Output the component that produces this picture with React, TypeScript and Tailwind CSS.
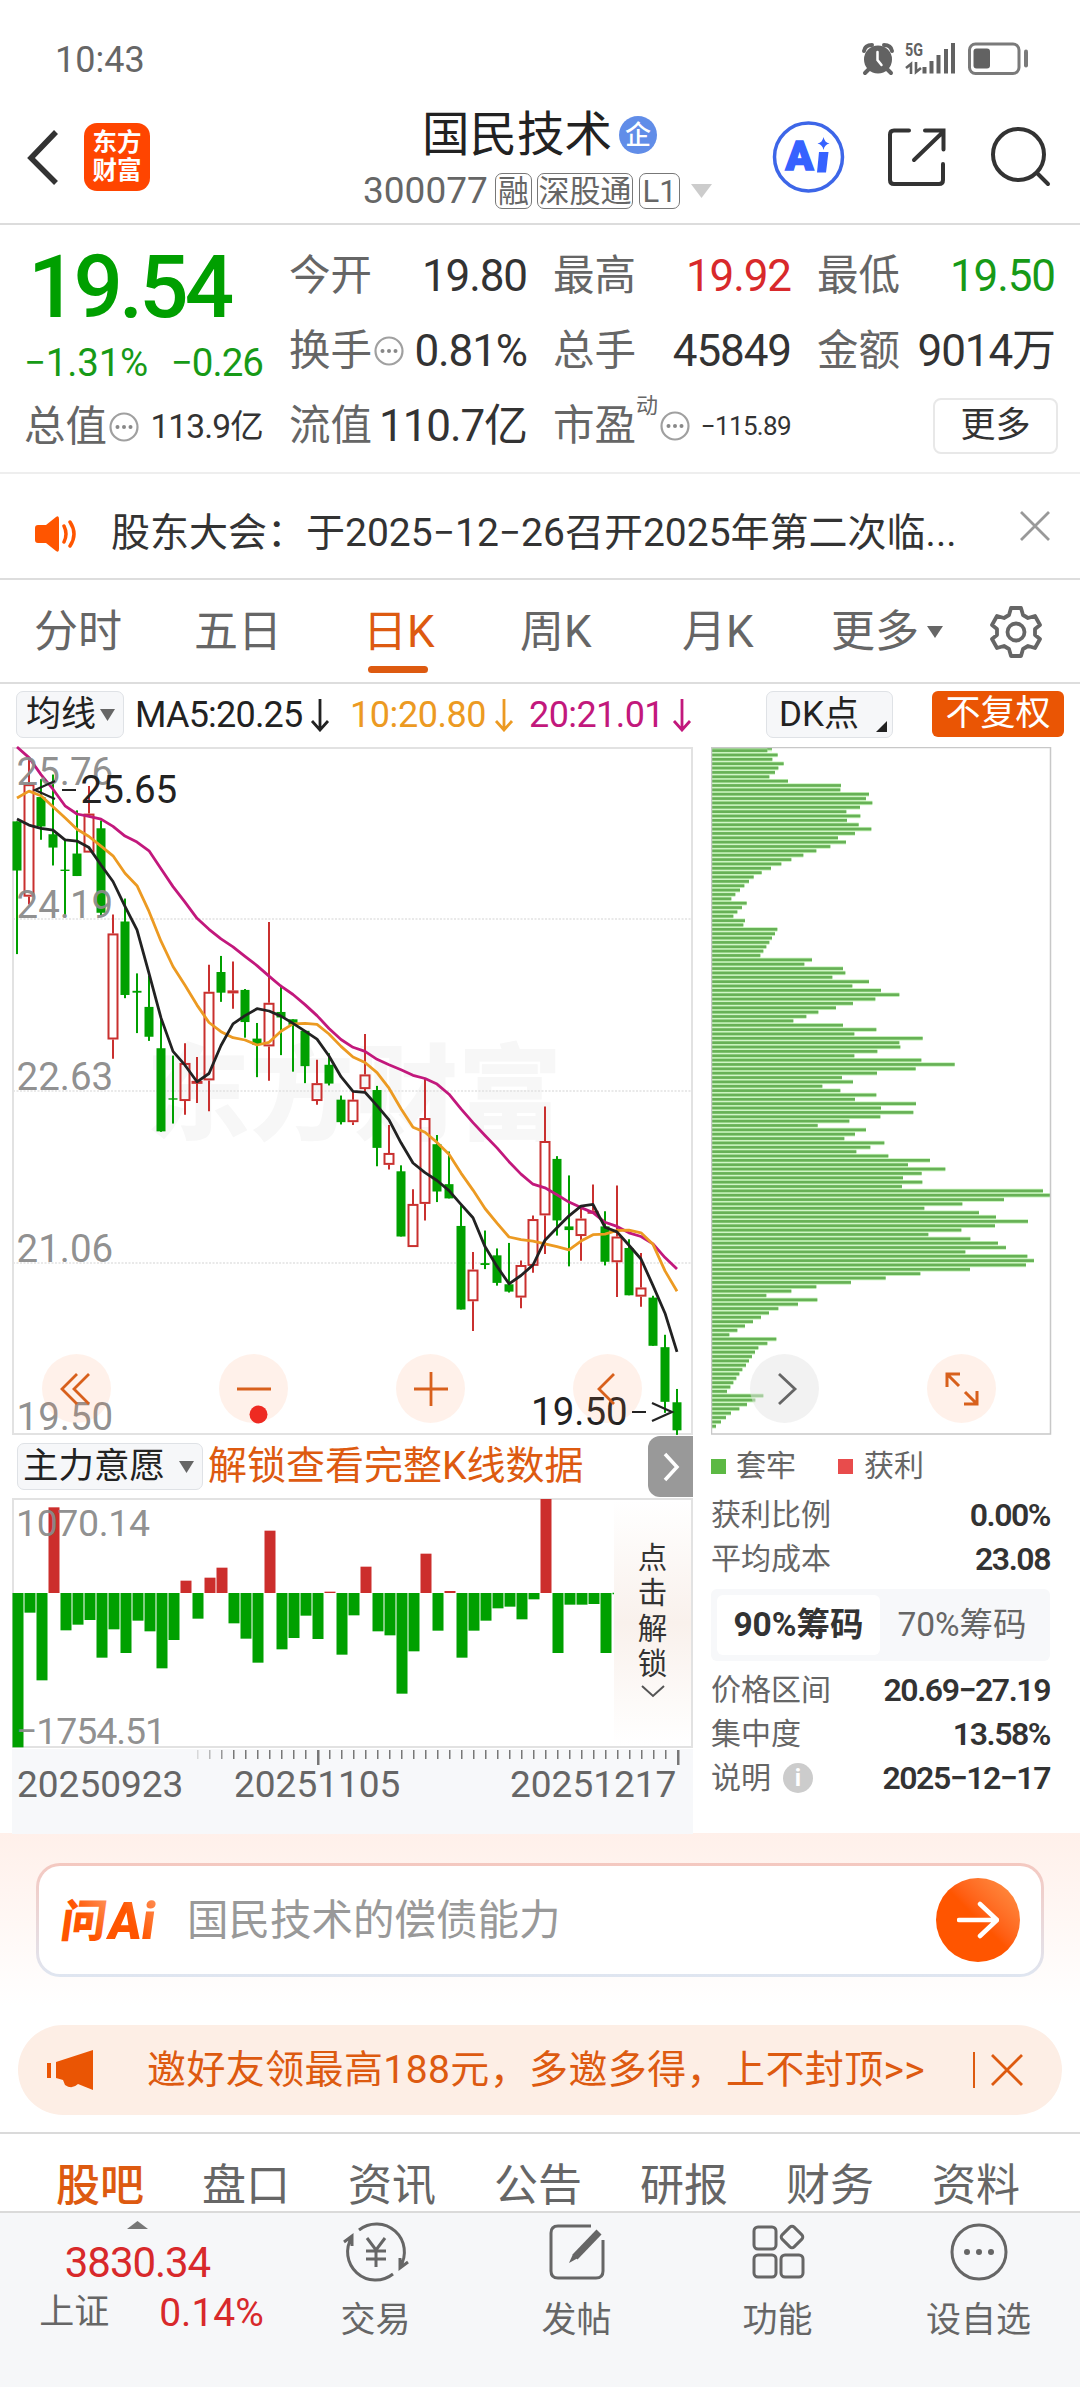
import clsx from "clsx";
import type { ReactNode } from "react";

type Candle = ["u" | "d", number, number, number, number];

// [direction, body top, body bottom, wick top, wick bottom]
const CANDLES: Candle[] = [
  ["d", 177, 284, 177, 466],
  ["u", 96, 341, 40, 358],
  ["d", 124, 188, 85, 217],
  ["d", 205, 234, 75, 273],
  ["d", 282, 285, 215, 381],
  ["d", 247, 296, 153, 296],
  ["u", 160, 245, 100, 245],
  ["d", 192, 376, 175, 381],
  ["u", 421, 652, 380, 694],
  ["d", 395, 555, 345, 562],
  ["d", 546, 550, 508, 638],
  ["d", 581, 646, 513, 655],
  ["d", 671, 852, 605, 853],
  ["d", 780, 783, 687, 835],
  ["u", 703, 786, 660, 816],
  ["u", 742, 748, 690, 790],
  ["u", 548, 741, 489, 808],
  ["d", 505, 550, 470, 570],
  ["u", 545, 551, 482, 585],
  ["d", 544, 614, 542, 648],
  ["d", 650, 664, 616, 734],
  ["u", 572, 667, 396, 742],
  ["d", 592, 604, 533, 686],
  ["d", 608, 620, 608, 722],
  ["d", 633, 710, 632, 747],
  ["u", 747, 786, 696, 794],
  ["d", 707, 748, 682, 752],
  ["d", 783, 832, 774, 837],
  ["u", 783, 832, 765, 838],
  ["u", 728, 760, 640, 765],
  ["d", 762, 888, 753, 928],
  ["u", 899, 925, 838, 935],
  ["d", 939, 1081, 926, 1081],
  ["u", 1010, 1104, 978, 1104],
  ["u", 823, 1010, 737, 1046],
  ["d", 880, 983, 860, 1006],
  ["d", 967, 998, 896, 998],
  ["d", 1058, 1240, 1013, 1240],
  ["u", 1153, 1222, 1115, 1287],
  ["d", 1139, 1143, 1068, 1152],
  ["d", 1122, 1182, 1107, 1188],
  ["d", 1185, 1201, 1095, 1203],
  ["u", 1143, 1214, 1133, 1237],
  ["u", 1043, 1145, 1035, 1160],
  ["u", 873, 1035, 798, 1119],
  ["d", 912, 1046, 906, 1079],
  ["d", 1059, 1067, 948, 1146],
  ["u", 1042, 1080, 1018, 1134],
  ["u", 1025, 1031, 968, 1031],
  ["d", 1059, 1136, 1026, 1144],
  ["u", 1081, 1137, 970, 1213],
  ["d", 1106, 1209, 1087, 1209],
  ["u", 1192, 1212, 1117, 1234],
  ["d", 1214, 1319, 1210, 1319],
  ["d", 1322, 1441, 1295, 1465],
  ["d", 1442, 1503, 1413, 1513],
];

const MA5 = [
  172, 185, 192, 196, 217, 220, 234, 272, 308, 362, 413, 508, 605, 678, 708,
  744, 726, 665, 618, 600, 585, 590, 601, 617, 634, 651, 688, 733, 765, 767,
  796, 827, 877, 921, 942, 959, 981, 1011, 1040, 1103, 1146, 1184, 1166, 1143,
  1089, 1062, 1036, 1015, 1011, 1061, 1071, 1100, 1130, 1188, 1248, 1332,
];
const MA10 = [
  126, 111, 121, 145, 169, 194, 210, 231, 252, 290, 317, 373, 438, 493, 534,
  577, 615, 635, 648, 653, 664, 658, 634, 618, 617, 619, 640, 667, 690, 702,
  724, 758, 803, 843, 854, 876, 902, 943, 980, 1020, 1052, 1082, 1088, 1091,
  1097, 1103, 1110, 1091, 1077, 1076, 1068, 1067, 1073, 1098, 1156, 1200,
];
const MA20 = [
  15, 38, 75, 107, 143, 161, 166, 172, 188, 209, 222, 241, 280, 319, 353, 388,
  412, 433, 450, 471, 491, 514, 536, 554, 576, 600, 628, 652, 669, 678, 695,
  707, 718, 730, 737, 749, 771, 803, 833, 861, 888, 918, 945, 967, 975, 990,
  1006, 1018, 1029, 1050, 1059, 1073, 1081, 1097, 1127, 1152,
];

const CHIPS = [
  245, 231, 262, 246, 280, 264, 254, 237, 293, 452, 450, 536, 527, 546, 509,
  468, 510, 470, 505, 543, 494, 443, 467, 420, 378, 339, 303, 273, 242, 214,
  190, 176, 162, 149, 135, 123, 169, 155, 141, 129, 164, 159, 261, 254, 245,
  237, 228, 219, 210, 365, 342, 458, 465, 426, 536, 486, 572, 627, 555, 488,
  437, 384, 348, 309, 458, 558, 492, 697, 627, 630, 561, 492, 693, 793, 676,
  560, 455, 488, 396, 450, 558, 494, 677, 572, 669, 570, 477, 382, 527, 494,
  462, 582, 540, 498, 594, 719, 653, 765, 694, 638, 696, 635, 1058, 1080, 941,
  816, 702, 866, 917, 1013, 914, 813, 714, 840, 923, 947, 825, 1011, 1031,
  1007, 839, 690, 586, 482, 378, 303, 228, 381, 323, 264, 236, 212, 188, 164,
  141, 117, 258, 231, 204, 194, 185, 176, 167, 156, 147, 138, 129, 120, 110,
  219, 195, 170, 147, 122, 107, 92, 77,
];

// positive values hang below the zero line
const FLOWS = [
  463, 59, 262, -257, 112, 95, 81, 194, 109, 180, 83, 115, 226, 141, -37, 77,
  -46, -76, 91, 137, 209, -187, 169, 135, 68, 138, -4, 185, 67, -79, 115, 127,
  302, 175, -118, 113, -6, 194, 113, 83, 46, 41, 79, 19, -282, 180, 35, 35, 33,
  180,
];

const STEP = 12;
const px = (i: number) => 5 + i * STEP;
const py = (v: number) => (v - 15) * 0.4592;
const line = (values: number[]) =>
  values.map((v, i) => `${px(i)},${py(v).toFixed(1)}`).join(" ");

function Num({
  children,
  className,
}: {
  children: ReactNode;
  className?: string;
}) {
  return (
    <span className={clsx("tracking-[-0.025em]", className)}>{children}</span>
  );
}

function StatusBar() {
  return (
    <div className="flex h-[84px] items-start justify-between pt-[41px] pr-[51px] pl-[55px] text-[#666]">
      <span className="text-[36px] leading-[38px]">10:43</span>
      <svg width="168" height="36" viewBox="861 42 168 36" fill="none" className="overflow-visible">
        <circle cx="878" cy="60.500" r="14" fill="#626262" />
        <path d="M864 52q1-6 8-6M892 52q-1-6-8-6M869 70l-4 4M887 70l4 4" stroke="#626262" strokeWidth="4" strokeLinecap="round" />
        <path d="M877.500 53v8l4 5" stroke="#fff" strokeWidth="2.500" strokeLinecap="round" />
        <text x="905" y="57" fontSize="18" fontWeight="700" fill="#626262" textLength="18" lengthAdjust="spacingAndGlyphs">5G</text>
        <path d="M906 69l5-4v10M916 63v10l5-4" stroke="#626262" strokeWidth="2.600" />
        <path d="M924.500 68v6.500M931.500 62v12.500M938.500 56v18.500M946 50v24.500M953 44v30.500" stroke="#626262" strokeWidth="4" />
        <rect x="969.500" y="45" width="49.500" height="29.500" rx="6" stroke="#7a7a7a" strokeWidth="3" />
        <rect x="973.500" y="49.500" width="16.500" height="20" rx="3" fill="#626262" />
        <path d="M1026 52.500v14" stroke="#7a7a7a" strokeWidth="4" strokeLinecap="round" />
      </svg>
    </div>
  );
}

function Tag({ children, className }: { children: ReactNode; className: string }) {
  return (
    <span
      className={clsx(
        "flex h-[36px] items-center justify-center rounded-[7px] border-[1.5px] border-[#777] text-[31px] leading-none",
        className,
      )}
    >
      {children}
    </span>
  );
}

function Header() {
  return (
    <header className="flex h-[141px] border-b-2 border-[#dcdcdc]">
      <div className="flex w-[363px] pt-[39px] pl-[26px]">
        <svg width="34" height="68" viewBox="26 123 34 68" fill="none">
          <path d="M56 132L31 158l25 25" stroke="#333" strokeWidth="5.500" />
        </svg>
        <div className="ml-[24px] flex h-[68px] w-[66px] flex-col items-center justify-center rounded-[13px] bg-[#ff4500] text-[24.500px] leading-[28px] font-bold text-white">
          <span>东方</span>
          <span>财富</span>
        </div>
      </div>
      <div className="w-[402px] pt-[24px]">
        <div className="flex items-center pl-[59px]">
          <span className="text-[47.500px] leading-[54px] text-[#222]">国民技术</span>
          <span className="ml-[7px] flex size-[38px] items-center justify-center rounded-full bg-[#618de8] text-[26px] leading-none font-medium text-white">
            企
          </span>
        </div>
        <div className="mt-[10px] flex items-center text-[#666]">
          <span className="w-[132px] text-[37px] leading-[38px]">300077</span>
          <Tag className="w-[37px]">融</Tag>
          <Tag className="ml-[5px] w-[96px]">深股通</Tag>
          <Tag className="ml-[6px] w-[41px]">L1</Tag>
          <svg className="ml-[11px]" width="21" height="14">
            <path d="M0 0h21L10.500 14z" fill="#ccc" />
          </svg>
        </div>
      </div>
      <svg width="290" height="80" viewBox="765 118 290 80" fill="none" className="mt-[34px]">
        <circle cx="808.500" cy="157" r="34" stroke="#3d66e8" strokeWidth="3.500" />
        <text x="785.500" y="169.500" fontSize="40" fontWeight="900" fill="#3662ff" stroke="#3662ff" strokeWidth="1.500" textLength="28" lengthAdjust="spacingAndGlyphs">A</text>
        <path d="M819 152h9.500l-2.500 20.500h-9z" fill="#3662ff" />
        <path d="M823.500 137q1 5.500 6 6.500-5 1-6 6.500-1-5.500-6-6.500 5-1 6-6.500z" fill="#3662ff" />
        <g stroke="#333" strokeWidth="4" strokeLinecap="round">
          <path d="M909 130.500h-15q-4 0-4 4V180q0 4 4 4h45q4 0 4-4v-16M925 130.500h18.500v19M943 132l-29 28" />
          <circle cx="1018.500" cy="154.500" r="25.500" />
          <path d="M1037 173l11 11" />
        </g>
      </svg>
    </header>
  );
}

function Dots() {
  return (
    <svg className="ml-[2px] shrink-0" width="30" height="30" viewBox="0 0 30 30" fill="none">
      <circle cx="15" cy="15" r="13.500" stroke="#a0a0a0" strokeWidth="2.200" />
      <g fill="#888">
        <circle cx="8.500" cy="15" r="2" />
        <circle cx="15" cy="15" r="2" />
        <circle cx="21.500" cy="15" r="2" />
      </g>
    </svg>
  );
}

interface CellProps {
  label: string;
  value: string;
  hint?: boolean;
  sup?: string;
  valueClass?: string;
}

function Cell({ label, value, hint, sup, valueClass = "text-[44px] text-[#333]" }: CellProps) {
  return (
    <div className="flex h-[75px] items-center whitespace-nowrap">
      <span className="text-[41.500px] leading-none text-[#666]">{label}</span>
      {sup && <span className="-mt-[40px] text-[22px] leading-none text-[#666]">{sup}</span>}
      {hint && <Dots />}
      <Num className={clsx("ml-auto leading-none", valueClass)}>{value}</Num>
    </div>
  );
}

function Quote() {
  return (
    <section className="grid h-[249px] grid-cols-[239px_238px_238px_238px] gap-x-[26px] border-b-2 border-[#eee] pt-[13px] pl-[24px]">
      <div>
        <div className="h-[99px] pl-[4px] text-[87px] leading-[98px] font-medium tracking-[-0.045em] text-[#009f00]">
          19.54
        </div>
        <div className="flex h-[52px] items-center justify-between text-[38.500px] leading-none text-[#179a17]">
          <span className="tracking-[-0.005em]">−1.31%</span>
          <Num>−0.26</Num>
        </div>
        <Cell label="总值" hint value="113.9亿" valueClass="text-[33.500px] text-[#333]" />
      </div>
      <div>
        <Cell label="今开" value="19.80" />
        <Cell label="换手" hint value="0.81%" />
        <Cell label="流值" value="110.7亿" valueClass="text-[44px] text-[#333]" />
      </div>
      <div>
        <Cell label="最高" value="19.92" valueClass="text-[44px] text-[#d8292b]" />
        <Cell label="总手" value="45849" />
        <Cell label="市盈" sup="动" hint value="−115.89" valueClass="text-[26px] text-[#333]" />
      </div>
      <div>
        <Cell label="最低" value="19.50" valueClass="text-[44px] text-[#179a17]" />
        <Cell label="金额" value="9014万" valueClass="text-[44px] text-[#333]" />
        <div className="flex h-[75px] items-center justify-end">
          <div className="-mr-[3px] flex h-[56px] w-[125px] items-center justify-center rounded-[8px] border-2 border-[#e8e8e8] text-[35px] leading-none text-[#333]">
            更多
          </div>
        </div>
      </div>
    </section>
  );
}

function News() {
  return (
    <section className="flex h-[106px] items-center border-b-2 border-[#ddd] pt-[15px] pl-[34px]">
      <svg width="44" height="36" viewBox="0 0 44 36" fill="none">
        <path d="M4 9h8L22 1q3-2 3 2v30q0 4-3 2L12 27H4q-3 0-3-3V12q0-3 3-3z" fill="#ff5500" />
        <path d="M30 10q4 8 0 16M36 6q8 12 0 24" stroke="#ff5500" strokeWidth="3.500" strokeLinecap="round" />
      </svg>
      <span className="ml-[33px] w-[843px] text-[39px] leading-none whitespace-nowrap text-[#333]">
        股东大会：于2025−12−26召开2025年第二次临...
      </span>
      <svg className="-mt-[16px] ml-[66px]" width="30" height="30">
        <path d="M1 1l28 28M29 1L1 29" stroke="#999" strokeWidth="2.800" />
      </svg>
    </section>
  );
}

function PeriodTabs() {
  return (
    <nav className="flex h-[104px] items-center border-b-2 border-[#ddd] pt-[2px] pl-[34px] text-[44px] leading-none text-[#666]">
      <span className="w-[160px]">分时</span>
      <span className="w-[169px]">五日</span>
      <span className="relative w-[157px] text-[#dd5a10]">
        日K
        <span className="absolute top-[56px] left-[5px] h-[7px] w-[60px] rounded-full bg-[#dd5a10]" />
      </span>
      <span className="w-[162px]">周K</span>
      <span className="w-[149px]">月K</span>
      <span>更多</span>
      <svg className="ml-[8px]" width="16" height="12">
        <path d="M0 0h16L8 12z" fill="#666" />
      </svg>
      <svg className="ml-[46px]" width="54" height="54" viewBox="-27 -27 54 54" fill="none" stroke="#666" strokeWidth="3.800" strokeLinejoin="round">
        <path d="M-5-24H5L7-17 12-14 19-16 24-7 19-3V3L24 7 19 16 12 14 7 17 5 24H-5L-7 17-12 14-19 16-24 7-19 3V-3L-24-7-19-16-12-14-7-17z" />
        <circle r="8.500" />
      </svg>
    </nav>
  );
}

function DownArrow() {
  return (
    <svg className="ml-[8px]" width="20" height="34" fill="none">
      <path d="M10 1v30M2 23l8 9 8-9" stroke="currentColor" strokeWidth="2.800" />
    </svg>
  );
}

function IndicatorRow() {
  return (
    <div className="flex h-[63px] items-start pt-[7px] pl-[16px] text-[36px] leading-[46px] whitespace-nowrap">
      <div className="flex h-[47px] w-[108px] items-center rounded-[7px] border border-[#dfe2e6] bg-[#f6f7f9] pl-[9px] text-[35px] text-[#222]">
        均线
        <svg className="ml-[4px]" width="15" height="12">
          <path d="M0 0h15L7.500 12z" fill="#666" />
        </svg>
      </div>
      <div className="ml-[11px] flex h-[48px] w-[215px] items-center text-[#222]">
        <span className="tracking-[-0.022em]">MA5:20.25</span>
        <DownArrow />
      </div>
      <div className="flex h-[48px] w-[179px] items-center text-[#ec9a22]">
        <span className="tracking-[-0.012em]">10:20.80</span>
        <DownArrow />
      </div>
      <div className="flex h-[48px] w-[237px] items-center text-[#c2187c]">
        <span className="tracking-[-0.016em]">20:21.01</span>
        <DownArrow />
      </div>
      <div className="relative h-[47px] w-[127px] rounded-[7px] border border-[#dfe2e6] bg-[#f6f7f9] pl-[12px] text-[35px] text-[#222]">
        DK点
        <svg className="absolute right-[5px] bottom-[5px]" width="11" height="11">
          <path d="M11 0v11H0z" fill="#222" />
        </svg>
      </div>
      <div className="ml-[39px] h-[46px] w-[132px] rounded-[6px] bg-[#ea5504] text-center text-[35px] text-white">
        不复权
      </div>
    </div>
  );
}

function KLineChart() {
  return (
    <svg className="block overflow-visible" width="681" height="688" viewBox="0 0 681 688" fill="none">
      <text x="134" y="385" fontSize="104" fontWeight="900" fill="#f7f7f7">
        东方财富
      </text>
      <path d="M1 172h680M1 344h680M1 516h680" stroke="#e2e2e2" strokeWidth="1.500" strokeDasharray="2 1.500" />
      <rect x="1" y="1" width="679" height="686" stroke="#e2e2e2" strokeWidth="2" />
      {CANDLES.map(([dir, top, bottom, high, low], i) => {
        const x = px(i);
        const color = dir === "u" ? "#c9302f" : "#00a000";
        if (dir === "d") {
          return (
            <g key={i} fill={color}>
              <rect x={x - 1} y={py(high)} width="2" height={py(low) - py(high)} />
              <rect x={x - 4.5} y={py(top)} width="9" height={py(bottom) - py(top)} />
            </g>
          );
        }
        return (
          <g key={i} stroke={color} strokeWidth="2">
            <path d={`M${x} ${py(high)}V${py(top)}M${x} ${py(bottom)}V${py(low)}`} />
            <rect x={x - 4.5} y={py(top) + 1} width="9" height={Math.max(py(bottom) - py(top) - 2, 1)} />
          </g>
        );
      })}
      <g strokeWidth="2.800" strokeLinejoin="round">
        <polyline points={line(MA20)} stroke="#c2187c" />
        <polyline points={line(MA10)} stroke="#ec9a22" />
        <polyline points={line(MA5)} stroke="#222" />
      </g>
      <g fontSize="38.500" fill="#8a8a8a" fillOpacity="0.95">
        <text x="4.500" y="37.500">25.76</text>
        <text x="4.500" y="171">24.19</text>
        <text x="4.500" y="343">22.63</text>
        <text x="4.500" y="515">21.06</text>
        <text x="4.500" y="683">19.50</text>
      </g>
      <g fontSize="38.500" fill="#222">
        <text x="68.500" y="56">25.65</text>
        <text x="519" y="678">19.50</text>
      </g>
      <path d="M43 34l-20 9 20 9M50 43h14M620 665h14M640 656l20 9-20 9" stroke="#222" strokeWidth="2.200" />
    </svg>
  );
}

function ChipChart() {
  return (
    <svg className="block" width="341" height="688" viewBox="0 0 341 688">
      {CHIPS.map((end, i) => (
        <g key={i}>
          <rect x="0" y={Math.max(i * 4.359 - 2.9, 0)} width={(end - 62) / 3} height="4.400" fill="#c5f3b9" />
          <rect x="0" y={Math.max(i * 4.359 - 2.1, 0)} width={(end - 62) / 3} height="2.700" fill="#67b156" />
        </g>
      ))}
      <path d="M0 .5h339.500V687H.5V0" fill="none" stroke="#c8c8c8" strokeWidth="1.500" />
    </svg>
  );
}

function RoundButton({ grey, children }: { grey?: boolean; children: ReactNode }) {
  return (
    <div
      className={clsx(
        "flex size-[69px] items-center justify-center rounded-full",
        grey ? "bg-[#e6e6e6]/50" : "bg-[#ff8040]/11",
      )}
    >
      <svg
        width="40"
        height="40"
        viewBox="-20 -20 40 40"
        fill="none"
        stroke={grey ? "#666" : "#d8601c"}
        strokeWidth="2.800"
        className="overflow-visible"
      >
        {children}
      </svg>
    </div>
  );
}

function ChartControls() {
  return (
    <div className="absolute top-[607px] left-[42px] flex gap-[108px]">
      <RoundButton>
        <path d="M0-15l-15 15 15 15M12-15l-15 15 15 15" />
      </RoundButton>
      <RoundButton>
        <path d="M-17 0h34" />
        <circle cx="4.500" cy="25.500" r="9" fill="#ee2a22" stroke="none" />
      </RoundButton>
      <RoundButton>
        <path d="M-17 0h34M0-17v34" />
      </RoundButton>
      <RoundButton>
        <path d="M6-15L-9 0l15 15" />
      </RoundButton>
      <RoundButton grey>
        <path d="M-6-15L10 0-6 15" />
      </RoundButton>
      <RoundButton>
        <path d="M-2-15h-13v13M-15-15l12 12M2 15h13V2M15 15L3 3" strokeWidth="3" />
      </RoundButton>
    </div>
  );
}

function SelectorRow() {
  return (
    <div className="flex h-[63px] items-center whitespace-nowrap">
      <div className="ml-[5px] flex h-[47px] w-[186px] items-center rounded-[7px] border border-[#dfe2e6] bg-[#f6f7f9] pl-[5px] text-[35.500px] leading-none text-[#222]">
        主力意愿
        <svg className="ml-[14px]" width="15" height="12">
          <path d="M0 0h15L7.500 12z" fill="#666" />
        </svg>
      </div>
      <span className="ml-[5px] w-[440px] text-[39px] leading-none text-[#dd5a10]">
        解锁查看完整K线数据
      </span>
      <div className="flex h-[61px] w-[45px] items-center justify-center rounded-l-[12px] bg-[#999]">
        <svg width="18" height="30" fill="none">
          <path d="M3 2l12 13L3 28" stroke="#fff" strokeWidth="3.500" />
        </svg>
      </div>
    </div>
  );
}

function FlowChart() {
  return (
    <div className="relative h-[251px]">
      <svg className="block overflow-visible" width="681" height="251" viewBox="0 0 681 251" fill="none">
        <path d="M1 1h679v248H1z" stroke="#e2e2e2" strokeWidth="2" />
        {FLOWS.map((v, i) => (
          <rect
            key={i}
            x={0.5 + i * STEP}
            y={v > 0 ? 95 : 95 + v / 3}
            width="11"
            height={Math.abs(v) / 3}
            fill={v > 0 ? "#00a000" : "#cc2e2c"}
          />
        ))}
        <path d="M600.500 95.500h2" stroke="#00a000" strokeWidth="1.500" />
        <g fontSize="37.500" fill="#8a8a8a" fillOpacity="0.95">
          <text x="4" y="38" textLength="134">1070.14</text>
          <text x="4" y="246" textLength="150">−1754.51</text>
        </g>
      </svg>
      <div className="absolute top-[2px] right-[2px] flex h-[246px] w-[77px] flex-col items-center bg-linear-to-b from-white via-[#f9f1ec] to-white pt-[41px] text-[29.500px] leading-[35.300px] text-[#333]">
        <span>点</span>
        <span>击</span>
        <span>解</span>
        <span>锁</span>
        <svg className="mt-[3px]" width="24" height="13" fill="none">
          <path d="M1 1l11 10L23 1" stroke="#555" strokeWidth="2" />
        </svg>
      </div>
    </div>
  );
}

function DateAxis() {
  return (
    <div className="h-[85px] bg-[#f7f8fa] text-[37px] leading-none text-[#666]">
      <svg className="block" width="681" height="17" viewBox="0 0 681 17">
        {Array.from({ length: 41 }, (_, i) => {
          const major = i === 10 || i === 40;
          return (
            <rect
              key={i}
              x={185 + i * STEP}
              y="1"
              width={major ? 2.5 : 1.5}
              height={major ? 15 : 9}
              fill="#777"
              opacity={Math.min((i + 1) / 4, 1)}
            />
          );
        })}
      </svg>
      <div className="flex pl-[5px]">
        <span className="w-[217px]">20250923</span>
        <span className="w-[276px]">20251105</span>
        <span>20251217</span>
      </div>
    </div>
  );
}

function StatRow({ label, value, info }: { label: string; value: string; info?: boolean }) {
  return (
    <div className="flex h-[44px] items-center">
      <span className="text-[30px] leading-none text-[#666]">{label}</span>
      {info && (
        <span className="ml-[12px] flex size-[30px] items-center justify-center rounded-full bg-[#ccc] text-[24px] leading-none font-bold text-white">
          i
        </span>
      )}
      <span className="ml-auto text-[32px] leading-none font-semibold tracking-[-0.045em] text-[#333]">
        {value}
      </span>
    </div>
  );
}

function ChipStats() {
  return (
    <div className="w-[339px] pt-[9px]">
      <div className="flex h-[44px] items-center text-[30px] leading-none text-[#666]">
        <span className="size-[15px] bg-[#5cb944]" />
        <span className="ml-[10px] w-[102px]">套牢</span>
        <span className="size-[15px] bg-[#e84c4c]" />
        <span className="ml-[11px]">获利</span>
      </div>
      <div className="pt-[5px]">
        <StatRow label="获利比例" value="0.00%" />
        <StatRow label="平均成本" value="23.08" />
      </div>
      <div className="mt-[8px] mb-[7px] flex h-[72px] items-center rounded-[6px] bg-[#f7f8fa] px-[6px] text-[33.500px] leading-none text-[#666]">
        <div className="flex h-[60px] w-[163px] items-center justify-center rounded-[6px] bg-white font-bold text-[#333]">
          90%筹码
        </div>
        <div className="flex flex-1 justify-center">70%筹码</div>
      </div>
      <StatRow label="价格区间" value="20.69−27.19" />
      <StatRow label="集中度" value="13.58%" />
      <StatRow label="说明" value="2025−12−17" info />
    </div>
  );
}

function AskBox() {
  return (
    <section className="h-[192px] bg-linear-to-b from-[#fff0ea] to-white to-90% px-[36px] pt-[30px]">
      <div className="h-[114px] rounded-[24px] bg-linear-to-b from-[#f4c8c0] to-[#dfe6f1] p-[3px]">
        <div className="flex h-full items-center rounded-[21px] bg-white pr-[21px] pl-[21px]">
          <svg width="98" height="46" viewBox="0 0 98 46" className="overflow-visible">
            <defs>
              <linearGradient id="ask" x1="0" x2="1" y1="1" y2="0">
                <stop offset="0.500" stopColor="#ff5500" />
                <stop offset="1" stopColor="#ff9a66" />
              </linearGradient>
            </defs>
            <g fill="url(#ask)" fontWeight="900" transform="skewX(-8)">
              <text x="5" y="40" fontSize="45">问</text>
              <text x="52" y="42" fontSize="52" textLength="47" lengthAdjust="spacingAndGlyphs">Ai</text>
            </g>
          </svg>
          <span className="mt-[2px] ml-[29px] text-[41.500px] leading-none text-[#999]">
            国民技术的偿债能力
          </span>
          <div className="ml-auto flex size-[84px] items-center justify-center rounded-full bg-linear-to-tr from-[#ff5500] from-50% to-[#ff9447]">
            <svg width="42" height="38" fill="none" stroke="#fff" strokeWidth="4.500" strokeLinecap="round" strokeLinejoin="round">
              <path d="M2 19h38M23 3l17 16-17 16" />
            </svg>
          </div>
        </div>
      </div>
    </section>
  );
}

function Promo() {
  return (
    <div className="mx-[18px] flex h-[90px] items-center rounded-full bg-[#fdeee5] pl-[29px] text-[#dd5a10]">
      <svg width="46" height="40" viewBox="0 0 46 40" fill="#ea5504">
        <path d="M0 13h4v15H0zM9 12L46 0v40L31 34q-6 6-13 1l-2-5-7-2z" />
      </svg>
      <span className="ml-[54px] w-[826px] text-[39px] leading-none tracking-[0.010em] whitespace-nowrap">
        邀好友领最高188元，多邀多得，上不封顶&gt;&gt;
      </span>
      <span className="h-[36px] w-[1.500px] bg-[#dd5a10]" />
      <svg className="ml-[16px]" width="32" height="32">
        <path d="M1 1l30 30M31 1L1 31" stroke="#dd5a10" strokeWidth="2.800" />
      </svg>
    </div>
  );
}

const SECTION_TABS = ["股吧", "盘口", "资讯", "公告", "研报", "财务", "资料"];

function SectionTabs() {
  return (
    <nav className="mt-[17px] flex h-[81px] items-center border-y-2 border-[#dadada] pt-[26px] pl-[56px] text-[44px] leading-none text-[#666]">
      {SECTION_TABS.map((tab, i) => (
        <span key={tab} className={clsx("w-[146px]", i === 0 && "font-medium text-[#dd5a10]")}>
          {tab}
        </span>
      ))}
    </nav>
  );
}

function NavItem({ label, children }: { label: string; children: ReactNode }) {
  return (
    <div className="flex w-[201px] flex-col items-center pt-[8px]">
      <svg width="68" height="62" viewBox="-34 -31 68 62" fill="none" stroke="#666" strokeWidth="3">
        {children}
      </svg>
      <span className="mt-[20px] text-[35px] leading-none">{label}</span>
    </div>
  );
}

function BottomNav() {
  return (
    <footer className="flex h-[174px] bg-[#f6f7f9] text-[#666]">
      <div className="flex w-[275px] flex-col items-center pt-[8px]">
        <svg width="21" height="8">
          <path d="M0 8L10.500 0 21 8z" fill="#777" />
        </svg>
        <Num className="mt-[13px] text-[42px] leading-[42px] text-[#d8292b]">3830.34</Num>
        <div className="mt-[9px] flex items-center leading-[40px]">
          <span className="mr-[50px] ml-[28px] text-[35px]">上证</span>
          <span className="text-[39px] text-[#d8292b]">0.14%</span>
        </div>
      </div>
      <NavItem label="交易">
        <path d="M-17-22A28 28 0 0 1 24 15M17 22A28 28 0 0 1-24-15M-32-10l8-6v10M32 10l-8 6V6" />
        <path d="M-9-14l9 12 9-12M0-2v17M-10-1h20M-10 7h20" />
      </NavItem>
      <NavItem label="发帖">
        <path d="M14-26h-33q-7 0-7 7v38q0 7 7 7h38q7 0 7-7v-31" />
        <path d="M22-20L-2 5" strokeWidth="7" />
        <path d="M-4 2l5 4-9 5z" fill="#666" stroke="none" />
      </NavItem>
      <NavItem label="功能">
        <rect x="-24" y="-25" width="22" height="22" rx="4" />
        <rect x="-24" y="3" width="22" height="22" rx="4" />
        <rect x="3" y="3" width="22" height="22" rx="4" />
        <rect x="5.500" y="-23.500" width="17" height="17" rx="3" transform="rotate(45 14 -15)" />
      </NavItem>
      <NavItem label="设自选">
        <circle r="27" />
        <g fill="#666" stroke="none">
          <circle cx="-12" r="3" />
          <circle r="3" />
          <circle cx="12" r="3" />
        </g>
      </NavItem>
    </footer>
  );
}

export default function App() {
  return (
    <div className="h-[2388px] w-[1080px] overflow-hidden bg-white font-['Roboto','Noto_Sans_CJK_SC',sans-serif]">
      <StatusBar />
      <Header />
      <Quote />
      <News />
      <PeriodTabs />
      <IndicatorRow />
      <div className="relative flex h-[1086px]">
        <div className="w-[693px] pl-[12px]">
          <KLineChart />
          <SelectorRow />
          <FlowChart />
          <DateAxis />
        </div>
        <div className="pl-[18px]">
          <ChipChart />
          <ChipStats />
        </div>
        <ChartControls />
      </div>
      <AskBox />
      <Promo />
      <SectionTabs />
      <BottomNav />
    </div>
  );
}
